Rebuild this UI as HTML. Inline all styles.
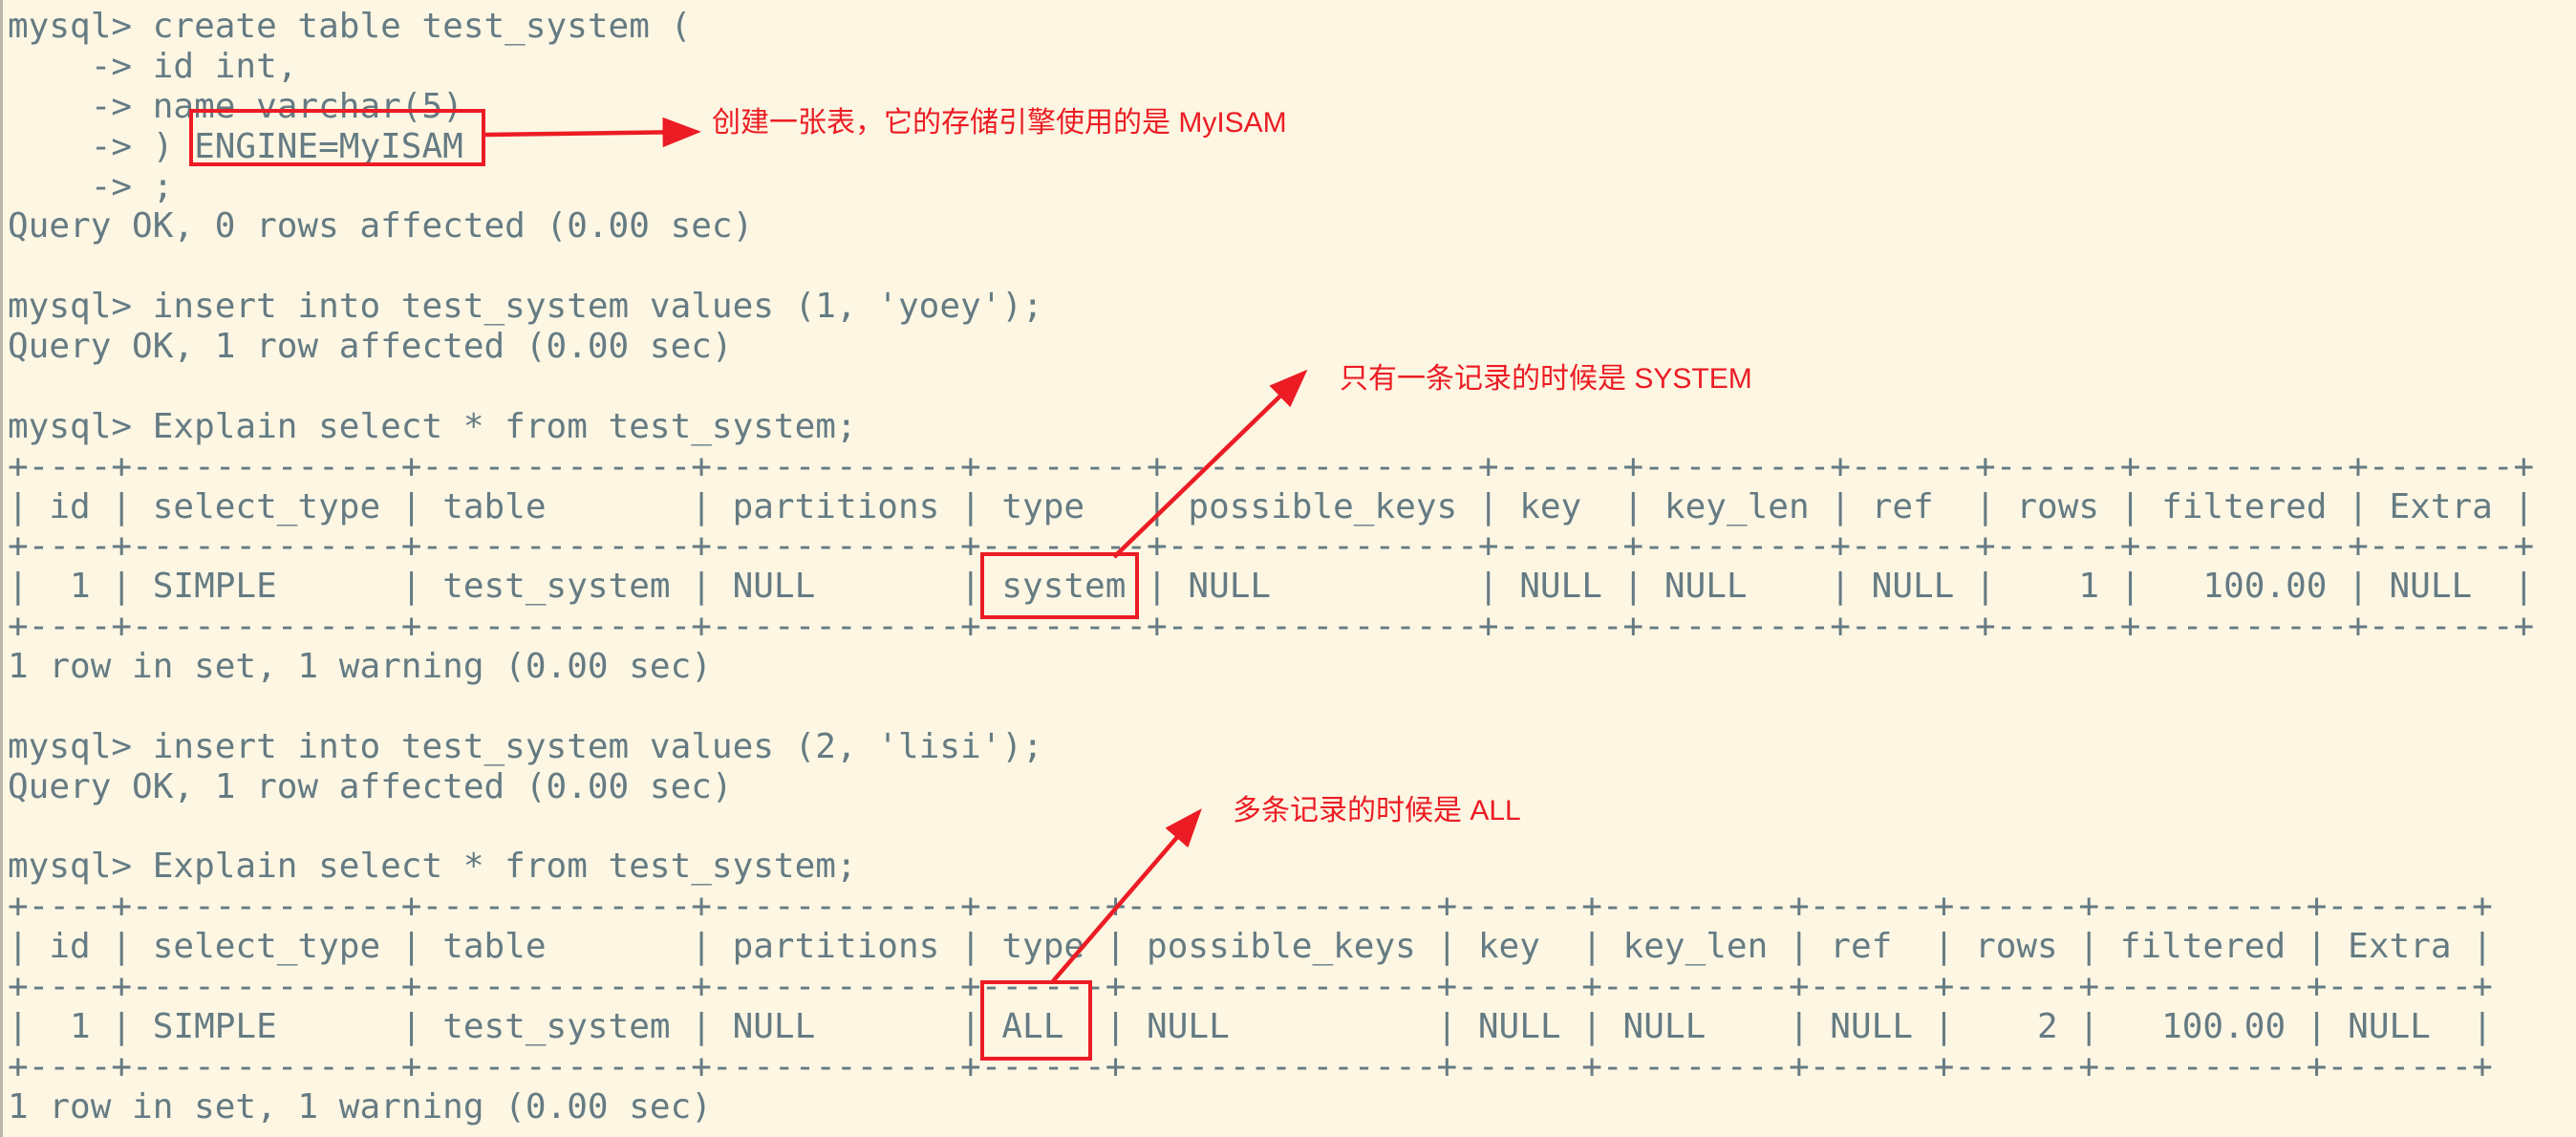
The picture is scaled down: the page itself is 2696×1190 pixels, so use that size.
<!DOCTYPE html>
<html><head><meta charset="utf-8"><style>
html,body{margin:0;padding:0;}
body{width:2696px;height:1190px;background:#fdf6e3;position:relative;overflow:hidden;}
.bl{position:absolute;left:0;top:0;width:3px;height:1190px;background:#b9b5a8;}
pre{position:absolute;left:8px;top:7px;margin:0;font-family:"DejaVu Sans Mono","Liberation Mono",monospace;font-size:36px;line-height:41.87px;color:#657b83;}
.an{position:absolute;font-family:"Liberation Sans","Noto Sans CJK SC",sans-serif;font-size:30px;color:#ec1c24;white-space:nowrap;line-height:1;}
svg{position:absolute;left:0;top:0;}
</style></head><body>
<div class="bl"></div>
<pre>mysql&gt; create table test_system (
    -&gt; id int,
    -&gt; name varchar(5)
    -&gt; ) ENGINE=MyISAM
    -&gt; ;
Query OK, 0 rows affected (0.00 sec)

mysql&gt; insert into test_system values (1, 'yoey');
Query OK, 1 row affected (0.00 sec)

mysql&gt; Explain select * from test_system;
+----+-------------+-------------+------------+--------+---------------+------+---------+------+------+----------+-------+
| id | select_type | table       | partitions | type   | possible_keys | key  | key_len | ref  | rows | filtered | Extra |
+----+-------------+-------------+------------+--------+---------------+------+---------+------+------+----------+-------+
|  1 | SIMPLE      | test_system | NULL       | system | NULL          | NULL | NULL    | NULL |    1 |   100.00 | NULL  |
+----+-------------+-------------+------------+--------+---------------+------+---------+------+------+----------+-------+
1 row in set, 1 warning (0.00 sec)

mysql&gt; insert into test_system values (2, 'lisi');
Query OK, 1 row affected (0.00 sec)

mysql&gt; Explain select * from test_system;
+----+-------------+-------------+------------+------+---------------+------+---------+------+------+----------+-------+
| id | select_type | table       | partitions | type | possible_keys | key  | key_len | ref  | rows | filtered | Extra |
+----+-------------+-------------+------------+------+---------------+------+---------+------+------+----------+-------+
|  1 | SIMPLE      | test_system | NULL       | ALL  | NULL          | NULL | NULL    | NULL |    2 |   100.00 | NULL  |
+----+-------------+-------------+------------+------+---------------+------+---------+------+------+----------+-------+
1 row in set, 1 warning (0.00 sec)</pre>
<svg width="2696" height="1190">
<defs><marker id="a" markerWidth="9" markerHeight="7" refX="7" refY="3.5" orient="auto" markerUnits="strokeWidth"><path d="M0,0 L9,3.5 L0,7 Z" fill="#ec1c24"/></marker></defs>
<g fill="none" stroke="#ec1c24" stroke-width="4">
<rect x="200" y="116" width="306" height="56"/>
<rect x="1028" y="580" width="162" height="66"/>
<rect x="1028" y="1028" width="113" height="80"/>
</g>
<g stroke="#ec1c24" stroke-width="4.5" fill="none">
<line x1="506" y1="141" x2="725" y2="138" marker-end="url(#a)"/>
<line x1="1166" y1="583" x2="1362" y2="393" marker-end="url(#a)"/>
<line x1="1102" y1="1027" x2="1252" y2="853" marker-end="url(#a)"/>
</g>
</svg>
<div class="an" style="left:745px;top:114px;">创建一张表，它的存储引擎使用的是 MyISAM</div>
<div class="an" style="left:1402px;top:382px;">只有一条记录的时候是 SYSTEM</div>
<div class="an" style="left:1290px;top:834px;">多条记录的时候是 ALL</div>
</body></html>
